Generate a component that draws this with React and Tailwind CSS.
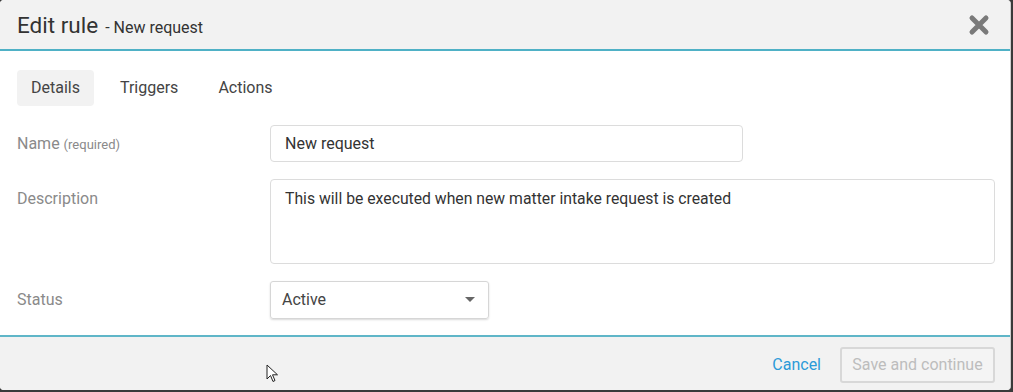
export default function App() {
    return (
        <div className="w-[1013px] h-[392px] bg-[#3a3a3a] overflow-hidden relative" style={{ fontFamily: "Roboto, 'Liberation Sans', sans-serif" }}>
            <div className="w-[1011px] h-[390px] bg-white rounded-[4px] overflow-hidden flex flex-col border-r border-[#cfcfcf]">
                {/* header */}
                <div className="h-[51px] shrink-0 bg-[#f2f2f2] border-b-2 border-[#4fb1c6] flex items-center justify-between pl-[17px] pr-[20px] pt-[2px]">
                    <h2 className="text-[#333] flex items-baseline">
                        <span className="text-[22.5px]">Edit rule</span>
                        <span className="text-[16px] ml-[7px]">- New request</span>
                    </h2>
                    <svg width="22" height="22" viewBox="0 0 22 22" className="mt-[-2px]">
                        <path d="M4 4 L18 18 M18 4 L4 18" stroke="#7a7a7a" strokeWidth="5" strokeLinecap="round" />
                    </svg>
                </div>

                {/* body */}
                <div className="flex-1 pl-[17px] pr-[15px] pt-[18px]">
                    <div className="flex items-center gap-[8px] text-[16px] text-[#444] pt-px">
                        <button className="h-[36px] px-[14px] bg-[#f2f2f2] rounded-[4px]">Details</button>
                        <button className="h-[36px] px-[18px]">Triggers</button>
                        <button className="h-[36px] px-[14px]">Actions</button>
                    </div>

                    <div className="mt-[19px] flex items-center">
                        <label className="w-[253px] shrink-0 text-[16px] text-[#8a8a8a]">
                            Name <span className="text-[13px]">(required)</span>
                        </label>
                        <div className="w-[473px] h-[37px] border border-[#dcdcdc] rounded-[4px] flex items-center px-[14px] text-[16px] text-[#333]">
                            New request
                        </div>
                    </div>

                    <div className="mt-[17px] flex items-start">
                        <label className="w-[253px] shrink-0 text-[16px] text-[#8a8a8a] pt-[8px]">Description</label>
                        <div className="w-[726px] h-[85px] border border-[#dcdcdc] rounded-[4px] px-[14px] pt-[7px] text-[15.75px] text-[#333]">
                            This will be executed when new matter intake request is created
                        </div>
                    </div>

                    <div className="mt-[17px] flex items-center">
                        <label className="w-[253px] shrink-0 text-[16px] text-[#8a8a8a]">Status</label>
                        <div className="w-[219px] h-[38px] border border-[#d6d6d6] rounded-[3px] shadow-[0_1px_2px_rgba(0,0,0,0.15)] flex items-center justify-between pl-[11px] pr-[13px] text-[16px] text-[#444]">
                            <span>Active</span>
                            <svg width="10" height="6" viewBox="0 0 10 6">
                                <path d="M0 0 L10 0 L5 5 Z" fill="#666" />
                            </svg>
                        </div>
                    </div>
                </div>

                {/* footer */}
                <div className="h-[55px] shrink-0 bg-[#f2f2f2] border-t-2 border-[#5fb6c8] flex items-center justify-end gap-[19px] pr-[15px] pt-[3px]">
                    <button className="text-[16px] text-[#2b9ad8]">Cancel</button>
                    <button className="w-[155px] h-[36px] border-2 border-[#d8d8d8] rounded-[3px] text-[16px] text-[#bdbdbd] bg-[#f4f4f4]">
                        Save and continue
                    </button>
                </div>
            </div>

            {/* mouse pointer */}
            <svg width="14" height="20" viewBox="0 0 14 20" className="absolute left-[266px] top-[364px]">
                <path d="M1 1 L1 15 L4.5 11.5 L7 17.5 L9 16.5 L6.5 10.8 L11.5 10.8 Z" fill="#fff" stroke="#222" strokeWidth="1" strokeLinejoin="round" />
            </svg>
        </div>
    );
}
